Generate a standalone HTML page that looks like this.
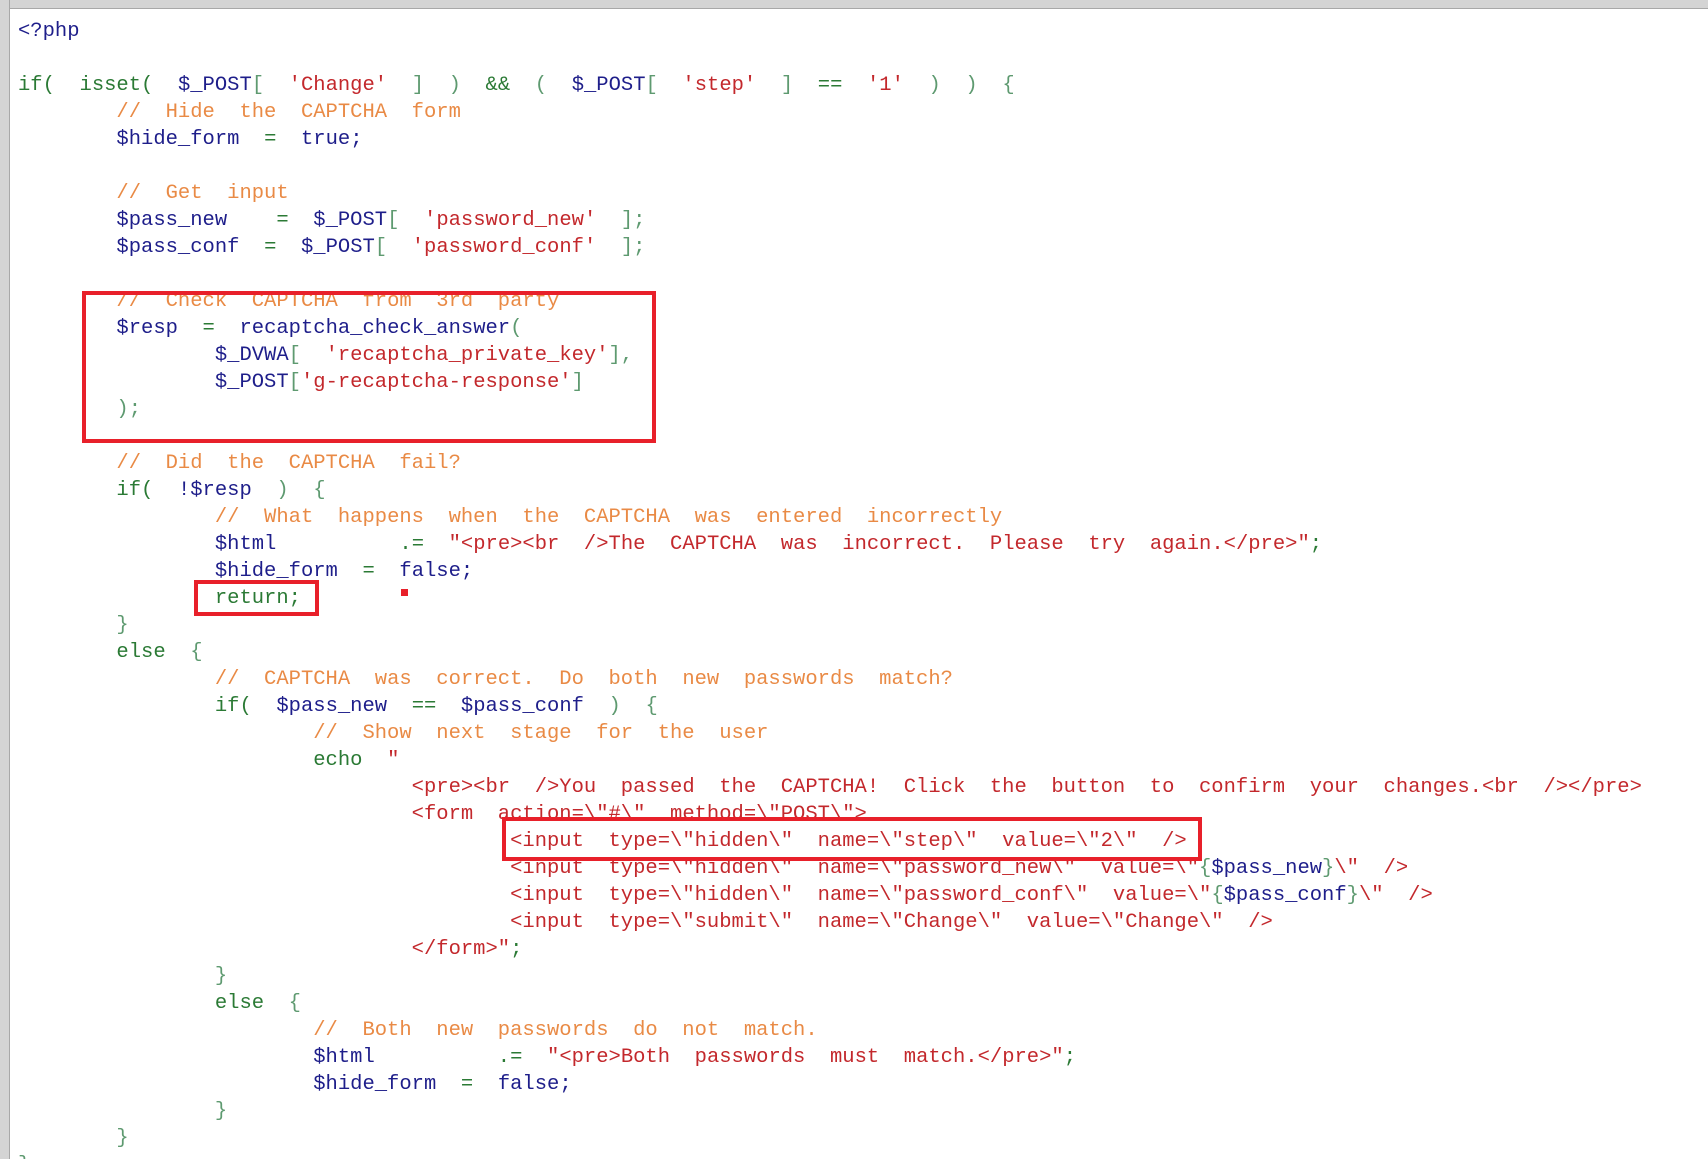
<!DOCTYPE html>
<html><head><meta charset="utf-8"><style>
html,body{margin:0;padding:0;background:#fff;width:1708px;height:1159px;overflow:hidden;position:relative}
.top{position:absolute;left:0;top:0;width:1708px;height:8px;background:#d4d4d4;border-bottom:1px solid #a8a8a8}
.side{position:absolute;left:0;top:0;width:9px;height:1159px;background:#d4d4d4;border-right:1px solid #a8a8a8}
pre{position:absolute;left:18px;top:18px;margin:0;font-family:"Liberation Mono",monospace;font-size:20.5px;line-height:27px;tab-size:8;-moz-tab-size:8;color:#1e1e8a;letter-spacing:0}
.k{color:#2b7a35}.p{color:#5e9a70}.s{color:#c3282c}.c{color:#e98a45}.v{color:#1e1e8a}
.box{position:absolute;border:4px solid #e8202a;box-sizing:border-box}
</style></head><body>
<div class="top"></div><div class="side"></div>
<pre><span class="v">&lt;?php</span>

<span class="k">if(</span>  <span class="k">isset(</span>  <span class="v">$_POST</span><span class="p">[</span>  <span class="s">'Change'</span>  <span class="p">]</span>  <span class="p">)</span>  <span class="k">&amp;&amp;</span>  <span class="p">(</span>  <span class="v">$_POST</span><span class="p">[</span>  <span class="s">'step'</span>  <span class="p">]</span>  <span class="k">==</span>  <span class="s">'1'</span>  <span class="p">)</span>  <span class="p">)</span>  <span class="p">{</span>
	<span class="c">//  Hide  the  CAPTCHA  form</span>
	<span class="v">$hide_form</span>  <span class="k">=</span>  <span class="v">true;</span>

	<span class="c">//  Get  input</span>
	<span class="v">$pass_new</span>    <span class="k">=</span>  <span class="v">$_POST</span><span class="p">[</span>  <span class="s">'password_new'</span>  <span class="p">];</span>
	<span class="v">$pass_conf</span>  <span class="k">=</span>  <span class="v">$_POST</span><span class="p">[</span>  <span class="s">'password_conf'</span>  <span class="p">];</span>

	<span class="c">//  Check  CAPTCHA  from  3rd  party</span>
	<span class="v">$resp</span>  <span class="k">=</span>  <span class="v">recaptcha_check_answer</span><span class="p">(</span>
		<span class="v">$_DVWA</span><span class="p">[</span>  <span class="s">'recaptcha_private_key'</span><span class="p">],</span>
		<span class="v">$_POST</span><span class="p">[</span><span class="s">'g-recaptcha-response'</span><span class="p">]</span>
	<span class="p">);</span>

	<span class="c">//  Did  the  CAPTCHA  fail?</span>
	<span class="k">if(</span>  <span class="v">!$resp</span>  <span class="p">)</span>  <span class="p">{</span>
		<span class="c">//  What  happens  when  the  CAPTCHA  was  entered  incorrectly</span>
		<span class="v">$html</span>          <span class="k">.=</span>  <span class="s">"&lt;pre&gt;&lt;br  /&gt;The  CAPTCHA  was  incorrect.  Please  try  again.&lt;/pre&gt;"</span><span class="k">;</span>
		<span class="v">$hide_form</span>  <span class="k">=</span>  <span class="v">false;</span>
		<span class="k">return;</span>
	<span class="p">}</span>
	<span class="k">else</span>  <span class="p">{</span>
		<span class="c">//  CAPTCHA  was  correct.  Do  both  new  passwords  match?</span>
		<span class="k">if(</span>  <span class="v">$pass_new</span>  <span class="k">==</span>  <span class="v">$pass_conf</span>  <span class="p">)</span>  <span class="p">{</span>
			<span class="c">//  Show  next  stage  for  the  user</span>
			<span class="k">echo</span>  <span class="s">"</span>
<span class="s">				&lt;pre&gt;&lt;br  /&gt;You  passed  the  CAPTCHA!  Click  the  button  to  confirm  your  changes.&lt;br  /&gt;&lt;/pre&gt;</span>
<span class="s">				&lt;form  action=\"#\"  method=\"POST\"&gt;</span>
<span class="s">					&lt;input  type=\"hidden\"  name=\"step\"  value=\"2\"  /&gt;</span>
<span class="s">					&lt;input  type=\"hidden\"  name=\"password_new\"  value=\"</span><span class="p">{</span><span class="v">$pass_new</span><span class="p">}</span><span class="s">\"  /&gt;</span>
<span class="s">					&lt;input  type=\"hidden\"  name=\"password_conf\"  value=\"</span><span class="p">{</span><span class="v">$pass_conf</span><span class="p">}</span><span class="s">\"  /&gt;</span>
<span class="s">					&lt;input  type=\"submit\"  name=\"Change\"  value=\"Change\"  /&gt;</span>
<span class="s">				&lt;/form&gt;"</span><span class="k">;</span>
		<span class="p">}</span>
		<span class="k">else</span>  <span class="p">{</span>
			<span class="c">//  Both  new  passwords  do  not  match.</span>
			<span class="v">$html</span>          <span class="k">.=</span>  <span class="s">"&lt;pre&gt;Both  passwords  must  match.&lt;/pre&gt;"</span><span class="k">;</span>
			<span class="v">$hide_form</span>  <span class="k">=</span>  <span class="v">false;</span>
		<span class="p">}</span>
	<span class="p">}</span>
<span class="p">}</span></pre>
<div class="box" style="left:82px;top:291px;width:574px;height:152px"></div>
<div class="box" style="left:194px;top:580px;width:125px;height:36px"></div>
<div class="box" style="left:502px;top:817px;width:700px;height:44px"></div>
<div style="position:absolute;left:401px;top:589px;width:7px;height:7px;background:#e8202a"></div>
</body></html>
